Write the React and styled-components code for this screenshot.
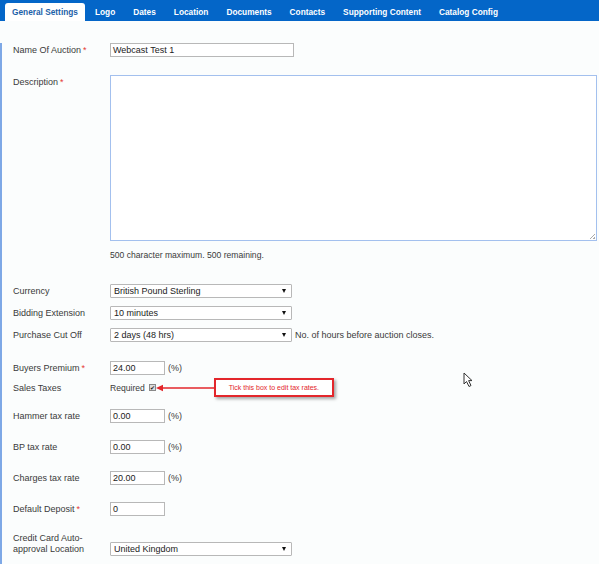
import { createGlobalStyle, styled } from 'styled-components';

const tabs = ['General Settings', 'Logo', 'Dates', 'Location', 'Documents', 'Contacts', 'Supporting Content', 'Catalog Config'];

function Select({ value, $w }) {
  return (
    <SelectBox $w={$w}>
      <span>{value}</span>
      <Caret />
    </SelectBox>
  );
}

function App() {
  return (
    <Page>
      <GlobalStyle />
      <TabBar>
        {tabs.map((t, i) => (
          <Tab key={t} $active={i === 0}>{t}</Tab>
        ))}
      </TabBar>
      <Content>
        <Row $mt={22}>
          <Label>Name Of Auction<Star>*</Star></Label>
          <TextInput $w={184}>Webcast Test 1</TextInput>
        </Row>
        <Row $mt={18}>
          <Label>Description<Star>*</Star></Label>
          <TextArea />
        </Row>
        <Row $mt={7}>
          <span />
          <Help>500 character maximum. 500 remaining.</Help>
        </Row>
        <Row $mt={22}>
          <Label>Currency</Label>
          <Select value="British Pound Sterling" $w={182} />
        </Row>
        <Row $mt={8}>
          <Label>Bidding Extension</Label>
          <Select value="10 minutes" $w={182} />
        </Row>
        <Row $mt={8}>
          <Label>Purchase Cut Off</Label>
          <Inline>
            <Select value="2 days (48 hrs)" $w={182} />
            <Note>No. of hours before auction closes.</Note>
          </Inline>
        </Row>
        <Row $mt={19}>
          <Label>Buyers Premium<Star>*</Star></Label>
          <Inline>
            <TextInput $w={55}>24.00</TextInput>
            <Note>(%)</Note>
          </Inline>
        </Row>
        <Row $mt={3} $center>
          <Label>Sales Taxes</Label>
          <Inline>
            <Help>Required</Help>
            <Check>✔</Check>
            <svg width="58" height="8" viewBox="0 0 58 8">
              <line x1="5" y1="4" x2="58" y2="4" stroke="#e3262b" strokeWidth="1.5" />
              <path d="M0 4 L7 0.8 L7 7.2 Z" fill="#e3262b" />
            </svg>
            <Callout>Tick this box to edit tax rates.</Callout>
          </Inline>
        </Row>
        <Row $mt={12}>
          <Label>Hammer tax rate</Label>
          <Inline>
            <TextInput $w={55}>0.00</TextInput>
            <Note>(%)</Note>
          </Inline>
        </Row>
        <Row $mt={17}>
          <Label>BP tax rate</Label>
          <Inline>
            <TextInput $w={55}>0.00</TextInput>
            <Note>(%)</Note>
          </Inline>
        </Row>
        <Row $mt={17}>
          <Label>Charges tax rate</Label>
          <Inline>
            <TextInput $w={55}>20.00</TextInput>
            <Note>(%)</Note>
          </Inline>
        </Row>
        <Row $mt={17}>
          <Label>Default Deposit<Star>*</Star></Label>
          <TextInput $w={55}>0</TextInput>
        </Row>
        <Row $mt={16}>
          <Label $lh={11}>Credit Card Auto-<br />approval Location</Label>
          <SelectWrap>
            <Select value="United Kingdom" $w={182} />
          </SelectWrap>
        </Row>
        <Cursor width="12" height="16" viewBox="0 0 12 16">
          <path d="M1 1 L1 12 L3.5 9.5 L6 14.5 L8 13.5 L5.6 8.6 L9 8.6 Z" fill="#fff" stroke="#333" strokeWidth="1" strokeLinejoin="round" />
        </Cursor>
      </Content>
    </Page>
  );
}

const GlobalStyle = createGlobalStyle`
  html, body {
    margin: 0;
    padding: 0;
    background: #fbfdfd;
  }
  body {
    font-family: Arial, "Liberation Sans", sans-serif;
  }
`;

const Page = styled.div`
  width: 599px;
  height: 564px;
  overflow: hidden;
  background: #fbfdfd;
`;

const TabBar = styled.div`
  display: flex;
  align-items: flex-end;
  height: 21px;
  background: #0466c8;
  padding-left: 5px;
`;

const Tab = styled.div`
  height: 18px;
  line-height: 18px;
  padding: 0 ${(p) => (p.$active ? '7px' : '9px')};
  margin-right: ${(p) => (p.$active ? '1px' : '0')};
  font-size: 8.3px;
  font-weight: bold;
  color: ${(p) => (p.$active ? '#1d5fa8' : '#fff')};
  background: ${(p) => (p.$active ? '#fff' : 'transparent')};
  border-radius: 3px 3px 0 0;
  white-space: nowrap;
`;

const Content = styled.div`
  position: relative;
  height: 543px;
  border-left: 2px solid #7ea8e6;
  padding-left: 11px;
`;

const Row = styled.div`
  display: grid;
  grid-template-columns: 97px auto;
  align-items: ${(p) => (p.$center ? 'center' : 'start')};
  margin-top: ${(p) => p.$mt}px;
`;

const Label = styled.div`
  font-size: 9px;
  line-height: ${(p) => p.$lh || 12}px;
  padding-top: 1px;
  color: #3a3a3a;
`;

const Star = styled.span`
  color: #e53935;
  margin-left: 2px;
`;

const TextInput = styled.div`
  box-sizing: border-box;
  width: ${(p) => p.$w}px;
  height: 14px;
  border: 1px solid #b8b8b8;
  background: #fff;
  font-size: 9px;
  line-height: 12px;
  padding-left: 2px;
  color: #222;
`;

const TextArea = styled.div`
  box-sizing: border-box;
  width: 487px;
  height: 166px;
  border: 1.5px solid #a3c0ee;
  background: #fff;
  position: relative;
  &::after {
    content: '';
    position: absolute;
    right: 1px;
    bottom: 1px;
    width: 5px;
    height: 5px;
    background: linear-gradient(135deg, transparent 45%, #aaa 45%, #aaa 55%, transparent 55%, transparent 75%, #aaa 75%);
  }
`;

const Help = styled.span`
  font-size: 8.6px;
  line-height: 14px;
  color: #3a3a3a;
`;

const Inline = styled.div`
  display: flex;
  align-items: center;
`;

const Note = styled.span`
  font-size: 9px;
  color: #3a3a3a;
  margin-left: 3px;
`;

const SelectWrap = styled.div`
  padding-top: 10px;
`;

const SelectBox = styled.div`
  box-sizing: border-box;
  display: flex;
  align-items: center;
  justify-content: space-between;
  width: ${(p) => p.$w}px;
  height: 14px;
  border: 1px solid #b8b8b8;
  border-radius: 1px;
  background: #fff;
  padding: 0 5px 0 3px;
  font-size: 9px;
  color: #222;
`;

const Caret = styled.span`
  width: 0;
  height: 0;
  border-left: 2.5px solid transparent;
  border-right: 2.5px solid transparent;
  border-top: 4px solid #111;
`;

const Check = styled.span`
  box-sizing: border-box;
  display: inline-flex;
  align-items: center;
  justify-content: center;
  width: 7px;
  height: 7px;
  margin-left: 4px;
  border: 1px solid #888;
  background: #ddd;
  font-size: 6px;
  line-height: 1;
  color: #222;
`;

const Callout = styled.div`
  box-sizing: border-box;
  width: 120px;
  height: 19px;
  border: 2px solid #e3262b;
  background: #fff;
  box-shadow: 2px 2px 3px rgba(0, 0, 0, 0.35);
  color: #e3262b;
  font-size: 7px;
  line-height: 15px;
  text-align: center;
`;

const Cursor = styled.svg`
  position: absolute;
  left: 461px;
  top: 329px;
`;

export default App;
